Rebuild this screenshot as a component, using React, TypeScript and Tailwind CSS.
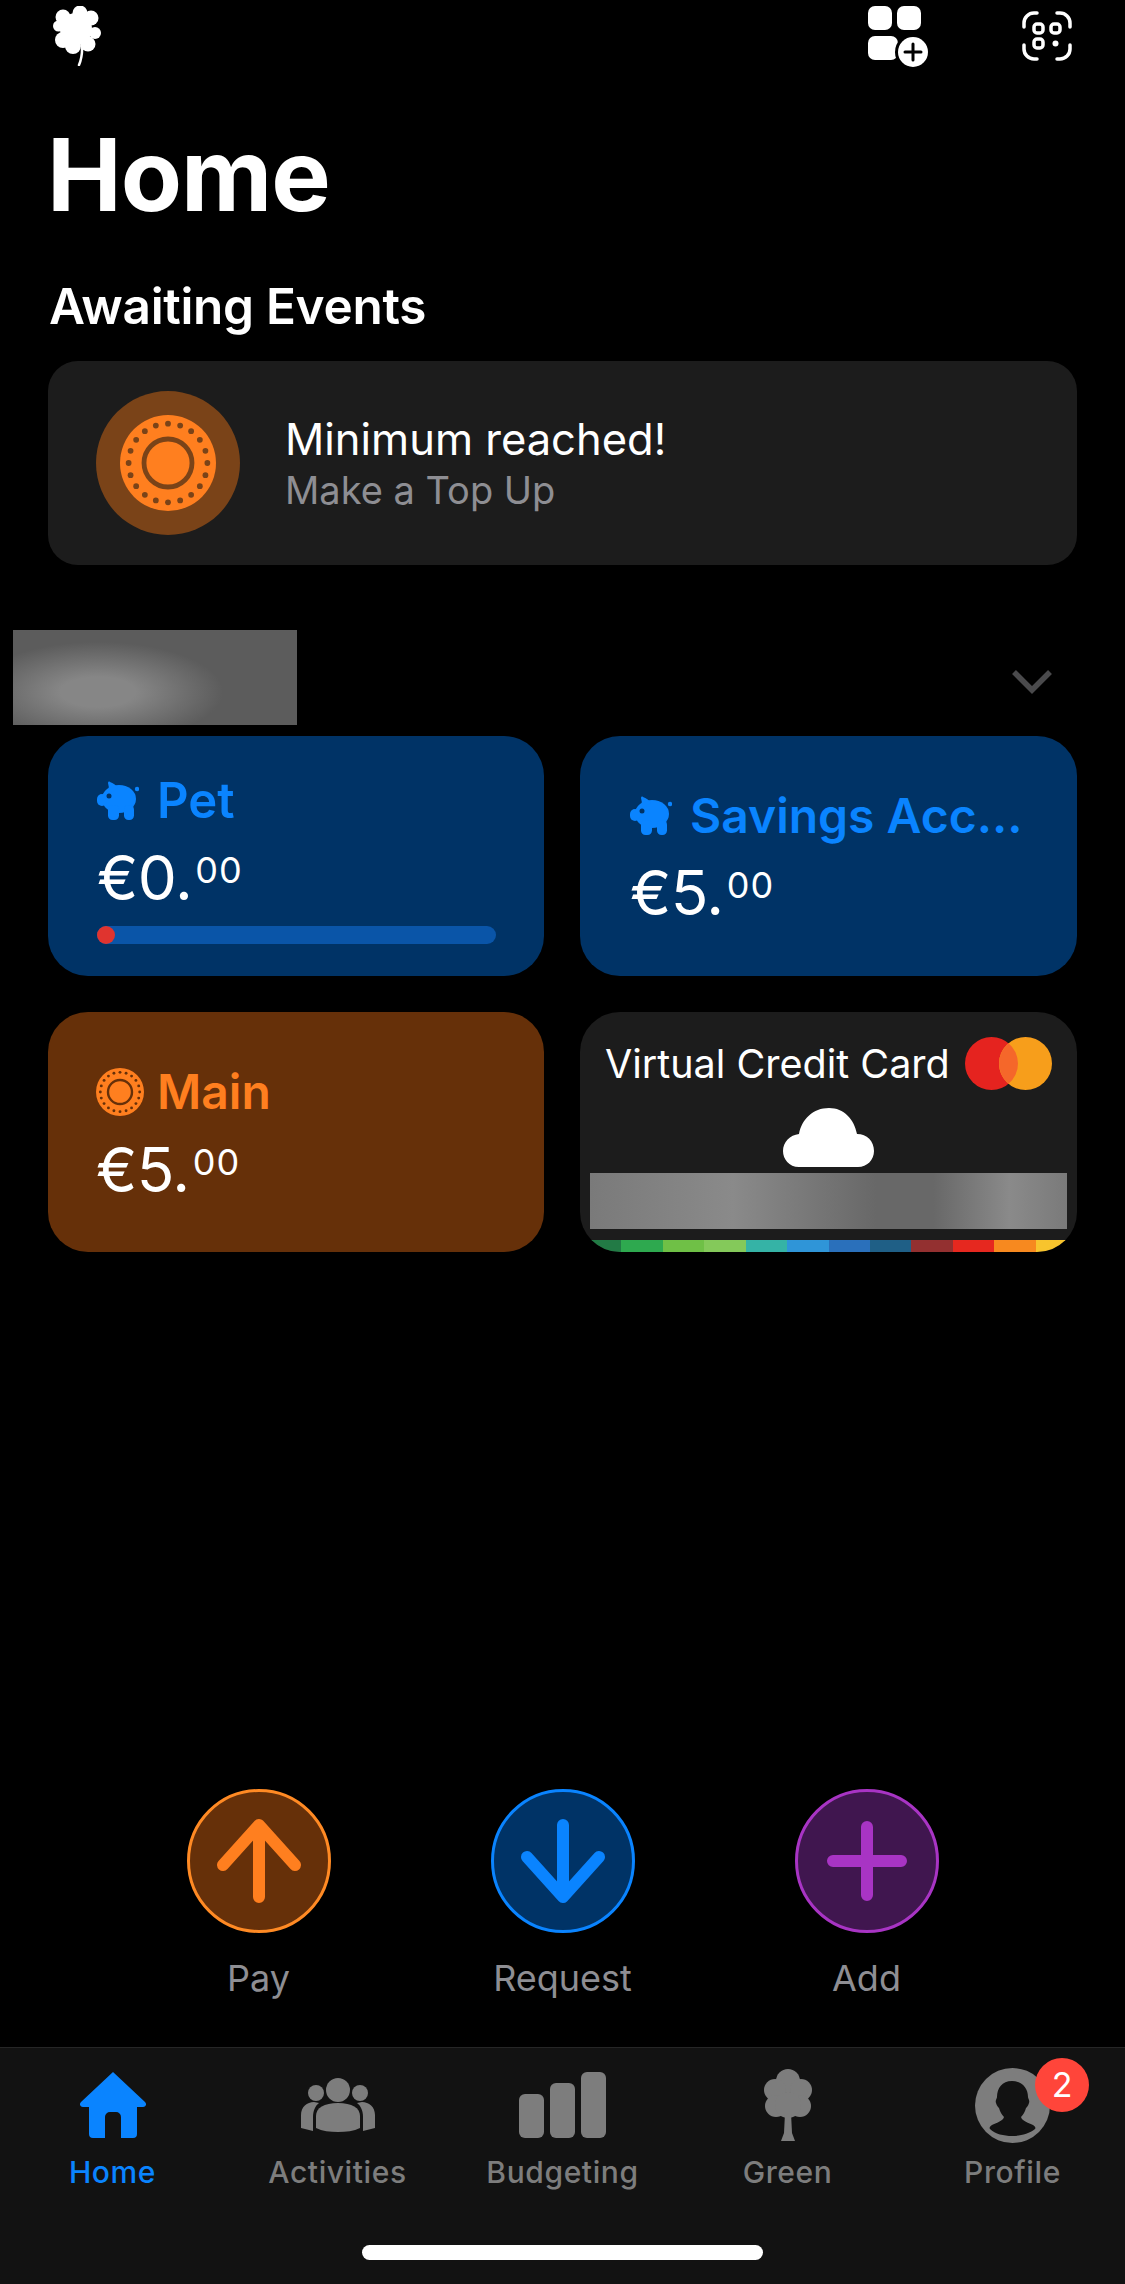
import React from 'react';

function Clover() {
  const lobes = [
    [27, 7, 7.5], [10, 11, 7.5], [5.5, 20, 5.5], [38, 12, 7.5], [42, 27, 6], [35, 38, 7.5], [20, 40, 8], [10, 34, 8],
  ];
  return (
    <svg viewBox="0 0 48 60" className="w-[48px] h-[60px]" fill="white">
      <circle cx="23" cy="23" r="16" />
      {lobes.map(([cx, cy, r], i) => (
        <circle key={i} cx={cx} cy={cy} r={r} />
      ))}
      <path d="M29 38c.5 8-.5 15-3 21" fill="none" stroke="white" strokeWidth="2.5" strokeLinecap="round" />
    </svg>
  );
}

function AppsPlus() {
  return (
    <svg viewBox="0 0 62 62" className="w-[62px] h-[62px]">
      <rect x="0" y="0" width="24" height="24" rx="7" fill="white" />
      <rect x="29" y="0" width="24" height="24" rx="7" fill="white" />
      <rect x="0" y="30" width="30" height="24" rx="7" fill="white" />
      <circle cx="45" cy="46" r="18" fill="black" />
      <circle cx="45" cy="46" r="15" fill="white" />
      <path d="M45 38v16M37 46h16" stroke="black" strokeWidth="3" strokeLinecap="round" />
    </svg>
  );
}

function ScanIcon() {
  return (
    <svg viewBox="0 0 50 50" className="w-[50px] h-[50px]" fill="none" stroke="white" strokeWidth="3.5" strokeLinecap="round">
      <path d="M15 2h-3A10 10 0 0 0 2 12v4" />
      <path d="M35 2h3a10 10 0 0 1 10 10v4" />
      <path d="M15 48h-3A10 10 0 0 1 2 38v-4" />
      <path d="M35 48h3a10 10 0 0 0 10-10v-4" />
      <rect x="12" y="13" width="9" height="9" rx="3" />
      <rect x="29" y="13" width="9" height="9" rx="3" />
      <rect x="12" y="28" width="9" height="9" rx="3" />
      <circle cx="33.5" cy="32.5" r="3" fill="white" stroke="none" />
    </svg>
  );
}

// orange coin, used in the event row and on the Main card
function Coin({ className, hole }: { className: string; hole: string }) {
  const dots = Array.from({ length: 20 }, (_, i) => {
    const a = (i / 20) * Math.PI * 2;
    return { x: 50 + 41 * Math.cos(a), y: 50 + 41 * Math.sin(a) };
  });
  return (
    <svg viewBox="0 0 100 100" className={className}>
      <circle cx="50" cy="50" r="50" fill="#ff7f1f" />
      <circle cx="50" cy="50" r="25" fill="none" stroke={hole} strokeWidth="5" />
      {dots.map((d, i) => (
        <circle key={i} cx={d.x} cy={d.y} r="3" fill={hole} />
      ))}
    </svg>
  );
}

function Piggy() {
  return (
    <svg viewBox="0 0 42 40" className="w-[42px] h-[40px] shrink-0" fill="#0a84ff">
      <ellipse cx="22" cy="18" rx="17" ry="14" />
      <rect x="0" y="13" width="10" height="12" rx="5" />
      <path d="M11 2c0-1 1-2 2-1 3 1 6 3 8 6l-8 5z" />
      <rect x="11" y="24" width="11" height="15" rx="4.5" />
      <rect x="27" y="24" width="10" height="15" rx="4.5" />
      <circle cx="40" cy="8" r="2.2" />
      <circle cx="12" cy="15" r="2.5" fill="#003366" />
    </svg>
  );
}

function Amount({ whole }: { whole: string }) {
  return (
    <div className="flex items-start text-white font-normal">
      <span className="text-[62px] leading-[70px] tracking-[-0.5px]">€{whole}.</span>
      <span className="text-[36px] leading-[44px] mt-[5px] ml-[3px] tracking-[1px]">00</span>
    </div>
  );
}

function Chevron() {
  return (
    <svg viewBox="0 0 40 24" className="w-[40px] h-[24px] mt-[8px]" fill="none" stroke="#4a4a4c" strokeWidth="5.5">
      <path d="M2 2l18 18L38 2" />
    </svg>
  );
}

function Mastercard() {
  return (
    <svg viewBox="0 0 87 53" className="w-[87px] h-[53px] shrink-0">
      <circle cx="26.5" cy="26.5" r="26.5" fill="#e5231f" />
      <circle cx="60.5" cy="26.5" r="26.5" fill="#f79e1b" />
      <path d="M43.5 6.2a26.5 26.5 0 0 1 0 40.6 26.5 26.5 0 0 1 0-40.6z" fill="#f5672a" />
    </svg>
  );
}

function Cloud() {
  return (
    <svg viewBox="0 0 91 59" className="w-[91px] h-[59px]" fill="white">
      <path d="M16 59C6 59 0 51 0 43c0-9 7-16 16-17C19 11 30 0 46 0c15 0 25 11 28 26 10 0 17 7 17 17 0 9-7 16-16 16z" />
    </svg>
  );
}

const stripes = ['#227a45', '#2ea94f', '#6fc046', '#84c95a', '#35b3a6', '#2f95d8', '#2a70bb', '#1f5f86', '#933030', '#e6281f', '#f7891f', '#f8c42d'];

function ActionArrow({ kind, color }: { kind: 'up' | 'down' | 'plus'; color: string }) {
  const d =
    kind === 'up'
      ? 'M42 78V6M6 46 42 6l36 40'
      : kind === 'down'
        ? 'M42 6v72M6 38l36 40 36-40'
        : 'M42 8v68M8 42h68';
  return (
    <svg viewBox="0 0 84 84" className="w-[84px] h-[84px]" fill="none" stroke={color} strokeWidth="12" strokeLinecap="round" strokeLinejoin="round">
      <path d={d} />
    </svg>
  );
}

function ActionButton({ label, kind, color, circle }: { label: string; kind: 'up' | 'down' | 'plus'; color: string; circle: string }) {
  return (
    <div className="w-[304px] flex flex-col items-center">
      <div className={`w-[144px] h-[144px] rounded-full border-[3px] flex items-center justify-center ${circle}`}>
        <ActionArrow kind={kind} color={color} />
      </div>
      <span className="mt-[23px] text-[36px] leading-[44px] text-[#8e8e93]">{label}</span>
    </div>
  );
}

function HomeIcon() {
  return (
    <svg viewBox="0 0 66 66" className="w-[66px] h-[66px]" fill="#0a84ff">
      <path d="M33 0 65 30c2 2 1 5-2 5h-6v27a4 4 0 0 1-4 4H41V45a5 5 0 0 0-5-5h-6a5 5 0 0 0-5 5v21H13a4 4 0 0 1-4-4V35H3c-3 0-4-3-2-5z" />
    </svg>
  );
}

function PeopleIcon() {
  return (
    <svg viewBox="0 0 74 54" className="w-[74px] h-[54px]" fill="#7d7d7d">
      <circle cx="15" cy="15" r="8" />
      <circle cx="59" cy="15" r="8" />
      <path d="M0 50V37c0-8 6-13 13-13l5 1c-4 3-6 8-6 14v14z" />
      <path d="M74 50V37c0-8-6-13-13-13l-5 1c4 3 6 8 6 14v14z" />
      <circle cx="37" cy="12" r="12" />
      <path d="M15 50V38c0-8 8-13 22-13s22 5 22 13v12c-6 3-14 4-22 4s-16-1-22-4z" />
    </svg>
  );
}

function BarsIcon() {
  return (
    <svg viewBox="0 0 88 66" className="w-[88px] h-[66px]" fill="#7d7d7d">
      <rect x="0" y="22" width="25" height="44" rx="6" />
      <rect x="31" y="11" width="25" height="55" rx="6" />
      <rect x="62" y="0" width="25" height="66" rx="6" />
    </svg>
  );
}

function TreeIcon() {
  return (
    <svg viewBox="0 0 48 72" className="w-[48px] h-[72px]" fill="#7d7d7d">
      <circle cx="24" cy="12" r="12" />
      <circle cx="11" cy="21" r="11" />
      <circle cx="37" cy="21" r="11" />
      <circle cx="12" cy="37" r="11" />
      <circle cx="36" cy="37" r="11" />
      <circle cx="24" cy="36" r="13" />
      <path d="M21 44h6l1 20 3 8H17l3-8z" />
    </svg>
  );
}

function ProfileIcon() {
  return (
    <div className="relative w-[75px] h-[75px]">
      <svg viewBox="0 0 75 75" className="w-[75px] h-[75px]">
        <circle cx="37.5" cy="37.5" r="37.5" fill="#7d7d7d" />
        <path d="M37 13c10 0 16 7 16 16 0 2 2 3 1 6s-2 4-3 5c-1 4-3 7-5 9 1 4 8 6 12 8 2 1 3 3 2 4-6 5-15 7-23 7s-17-2-22-7c-1-1 0-3 2-4 4-2 11-4 12-8-2-2-4-5-5-9-1-1-2-2-3-5s1-4 1-6c0-9 5-16 15-16z" fill="#121212" />
      </svg>
      {/* badge */}
      <div className="absolute -top-[10px] left-[60px] w-[54px] h-[54px] rounded-full bg-[#ff453a] flex items-center justify-center text-white text-[34px] leading-none">2</div>
    </div>
  );
}

function Tab({ label, icon, active }: { label: string; icon: React.ReactNode; active?: boolean }) {
  return (
    <div className="flex flex-col items-center">
      <div className="h-[76px] flex items-center justify-center">{icon}</div>
      <span className={`mt-[11px] text-[30px] leading-[36px] font-medium tracking-[0.6px] ${active ? 'text-[#0a84ff]' : 'text-[#7d7d7d]'}`}>{label}</span>
    </div>
  );
}

export default function App() {
  return (
    <div className="w-[1125px] h-[2284px] bg-black text-white overflow-hidden flex flex-col font-['Inter',sans-serif]">
      {/* top bar */}
      <div className="h-[70px] flex items-start justify-between pl-[53px] pr-[53px] pt-[6px]">
        <Clover />
        <div className="flex items-start gap-[92px]">
          <AppsPlus />
          <div className="pt-[5px]">
            <ScanIcon />
          </div>
        </div>
      </div>

      <h1 className="ml-[47px] mt-[50px] text-[100px] leading-[110px] font-bold tracking-[-1px]">Home</h1>
      <h2 className="ml-[49px] mt-[48px] text-[49.5px] leading-[56px] font-semibold tracking-[-0.3px]">Awaiting Events</h2>

      {/* event row */}
      <div className="mx-[48px] mt-[27px] h-[204px] rounded-[30px] bg-[#1c1c1c] flex items-center pl-[48px]">
        <div className="w-[144px] h-[144px] rounded-full bg-[#7a4318] flex items-center justify-center shrink-0">
          <Coin className="w-[96px] h-[96px]" hole="#7a4318" />
        </div>
        <div className="ml-[45px]">
          <div className="text-[43.5px] leading-[52px]">Minimum reached!</div>
          <div className="mt-[2px] text-[38px] leading-[46px] text-[#8e8e93]">Make a Top Up</div>
        </div>
      </div>

      {/* section header, title is blurred out in the source */}
      <div className="h-[95px] mt-[65px] flex items-center justify-between pl-[13px] pr-[73px]">
        <div className="w-[284px] h-[95px] bg-[#5c5c5c] bg-[radial-gradient(ellipse_125px_50px_at_85px_62px,#868686_30%,transparent)]" />
        <Chevron />
      </div>

      {/* accounts */}
      <div className="ml-[48px] mt-[11px] grid grid-cols-[496px_497px] gap-x-[36px] gap-y-[36px]">
        <div className="h-[240px] rounded-[40px] bg-[#003366] pl-[49px] pr-[48px] pt-[42px]">
          <div className="flex items-center gap-[18px] h-[46px]">
            <Piggy />
            <span className="text-[49px] font-semibold text-[#0a84ff] leading-[46px]">Pet</span>
          </div>
          <div className="mt-[19px]">
            <Amount whole="0" />
          </div>
          <div className="relative mt-[13px] h-[18px] rounded-full bg-[#0a55a8]">
            <div className="absolute left-0 top-0 w-[18px] h-[18px] rounded-full bg-[#e0342f]" />
          </div>
        </div>

        <div className="h-[240px] rounded-[40px] bg-[#003366] pl-[50px] pr-[30px] pt-[8px] flex flex-col justify-center">
          <div className="flex items-center gap-[18px] h-[46px]">
            <Piggy />
            <span className="text-[48px] font-semibold text-[#0a84ff] leading-[46px] whitespace-nowrap">Savings Acc...</span>
          </div>
          <div className="mt-[19px]">
            <Amount whole="5" />
          </div>
        </div>

        <div className="h-[240px] rounded-[40px] bg-[#663009] pl-[48px] pt-[57px]">
          <div className="flex items-center gap-[13px] h-[46px]">
            <Coin className="w-[48px] h-[48px]" hole="#663009" />
            <span className="text-[48px] font-semibold text-[#ff7f1f] leading-[46px]">Main</span>
          </div>
          <div className="mt-[20px]">
            <Amount whole="5" />
          </div>
        </div>

        <div className="h-[240px] rounded-[40px] bg-[#1c1c1c] overflow-hidden flex flex-col relative">
          <div className="flex items-center justify-between pl-[25px] pr-[25px] pt-[25px]">
            <span className="text-[39.5px] leading-[46px] whitespace-nowrap">Virtual Credit Card</span>
            <Mastercard />
          </div>
          <div className="flex justify-center mt-[18px]">
            <Cloud />
          </div>
          <div className="mx-[10px] mt-[6px] h-[56px] bg-[#7b7b7b] bg-[linear-gradient(90deg,#7a7a7a,#8a8a8a_30%,#686868_60%,#686868_72%,#8a8a8a_88%,#7a7a7a)]" />
          <div className="absolute bottom-0 left-0 right-0 h-[12px] flex">
            {stripes.map((c) => (
              <div key={c} className="flex-1" style={{ backgroundColor: c }} />
            ))}
          </div>
        </div>
      </div>

      {/* pay / request / add */}
      <div className="mt-auto flex justify-center">
        <ActionButton label="Pay" kind="up" color="#ff7f1f" circle="bg-[#663009] border-[#ff8a24]" />
        <ActionButton label="Request" kind="down" color="#0a84ff" circle="bg-[#003366] border-[#0a84ff]" />
        <ActionButton label="Add" kind="plus" color="#a834c4" circle="bg-[#40164f] border-[#a834c4]" />
      </div>

      {/* tab bar */}
      <div className="mt-[47px] h-[237px] bg-[#121212] border-t border-[#262626] relative">
        <div className="grid grid-cols-5 pt-[19px]">
          <Tab label="Home" icon={<HomeIcon />} active />
          <Tab label="Activities" icon={<PeopleIcon />} />
          <Tab label="Budgeting" icon={<BarsIcon />} />
          <Tab label="Green" icon={<TreeIcon />} />
          <Tab label="Profile" icon={<ProfileIcon />} />
        </div>
        <div className="absolute bottom-[24px] left-[362px] w-[401px] h-[15px] rounded-full bg-white" />
      </div>
    </div>
  );
}
